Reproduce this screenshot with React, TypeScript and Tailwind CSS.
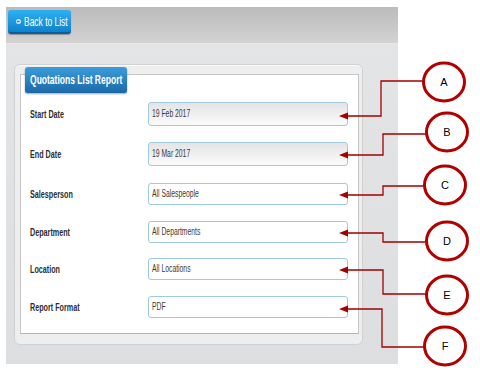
import React from "react";

const font = { fontFamily: '"Liberation Sans", Arial, sans-serif' };

type Row = { label: string; value: string; date?: boolean; mt: string };

const rows: Row[] = [
  { label: "Start Date", value: "19 Feb 2017", date: true, mt: "mt-[27px]" },
  { label: "End Date", value: "19 Mar 2017", date: true, mt: "mt-[16px]" },
  { label: "Salesperson", value: "All Salespeople", mt: "mt-[17px]" },
  { label: "Department", value: "All Departments", mt: "mt-[16px]" },
  { label: "Location", value: "All Locations", mt: "mt-[15px]" },
  { label: "Report Format", value: "PDF", mt: "mt-[16px]" },
];

const callouts = [
  { l: "A", cx: 444, cy: 82, d: "M423 81 H381 V116 H346", ay: 116 },
  { l: "B", cx: 447, cy: 132, d: "M427 134 H383 V155 H346", ay: 155 },
  { l: "C", cx: 445, cy: 185, d: "M424 186 H383 V195 H346", ay: 195 },
  { l: "D", cx: 447, cy: 241, d: "M427 242 H383 V233 H346", ay: 233 },
  { l: "E", cx: 447, cy: 295, d: "M427 294 H383 V270 H346", ay: 270 },
  { l: "F", cx: 445, cy: 346, d: "M424 347 H382 V309 H346", ay: 309 },
];

export default function App() {
  return (
    <div className="relative w-[480px] h-[380px] bg-white pt-[7px] pl-[6px] overflow-hidden" style={font}>
      <div className="w-[392px] h-[357px] flex flex-col bg-gradient-to-b from-[#e3e5e7] to-[#dcdee0]">
        {/* toolbar */}
        <div className="h-[37px] shrink-0 pl-[2px] pt-[3px] bg-gradient-to-b from-[#bbbbbb] to-[#d3d3d3] border-b border-[#e8e8e8]">
          <div className="w-[63px] h-[24px] rounded-[3px] bg-gradient-to-b from-[#2fb0f2] to-[#0e82cd] border-b-2 border-[#0b5f99] shadow-[0_1px_1px_rgba(0,0,0,0.3)] flex items-center pl-[8px] gap-[3px] text-[13px] leading-none">
            <svg width="5" height="7" viewBox="0 0 5 7" className="shrink-0">
              <circle cx="2.5" cy="3.5" r="2.5" fill="#cdeefc" />
              <path d="M3.8 3.5 H1.2 M2.3 2.3 L1.1 3.5 L2.3 4.7" stroke="#0e82cd" strokeWidth="0.9" fill="none" />
            </svg>
            <span className="inline-block origin-left scale-x-[0.65] whitespace-nowrap text-white text-[13px] leading-none">Back to List</span>
          </div>
        </div>
        {/* body */}
        <div className="pt-[20px] pl-[8px]">
          <div className="relative w-[349px] h-[281px] rounded-[6px] border border-[#cfd1d3] bg-[#eeeeee] pt-[9px] pl-[5px] shadow-[inset_0_1px_0_#fafafa]">
            <div className="w-[339px] h-[260px] border border-[#c6c6c6] border-b-[#b5b5b5] bg-white flex flex-col pl-[9px] text-[10px] leading-none">
              {rows.map((r) => (
                <div key={r.label} className={`flex items-center ${r.mt}`}>
                  <div className="w-[118px] shrink-0 flex items-center pt-[2px] text-[10px] leading-none">
                    <span className="inline-block origin-left scale-x-[0.72] whitespace-nowrap font-bold text-[10px] leading-none text-[#2e2e2e]">
                      {r.label}
                    </span>
                  </div>
                  <div
                    className={`w-[200px] shrink-0 ${r.date ? "h-[24px] bg-gradient-to-b from-[#e4e4e4] to-[#fbfbfb]" : "h-[22px] bg-white"} rounded-[3px] border border-[#9fcbe0] flex items-center pl-[3px] text-[10px] leading-none`}
                  >
                    <span className="inline-block origin-left scale-x-[0.68] whitespace-nowrap text-[10px] leading-none text-[#3a3a3a]">
                      {r.value}
                    </span>
                  </div>
                </div>
              ))}
            </div>
            {/* title tab */}
            <div className="absolute left-[10px] top-[2px] w-[102px] h-[26px] rounded-t-[3px] rounded-b-[2px] bg-gradient-to-b from-[#3b9ddb] to-[#1a69a8] shadow-[0_1px_2px_rgba(0,0,0,0.35)] flex items-center pl-[5px]">
              <span className="inline-block origin-left scale-x-[0.71] whitespace-nowrap text-white font-bold text-[12px] leading-none">
                Quotations List Report
              </span>
            </div>
          </div>
        </div>
      </div>

      {/* annotation overlay */}
      <svg className="absolute left-0 top-0" width="480" height="380" viewBox="0 0 480 380">
        {callouts.map((c) => (
          <g key={c.l}>
            <path d={c.d} stroke="#a30000" strokeWidth="1.3" fill="none" />
            <polygon points={`339,${c.ay} 348,${c.ay - 3.5} 348,${c.ay + 3.5}`} fill="#a30000" />
            <ellipse cx={c.cx} cy={c.cy} rx="20.5" ry="19" fill="white" stroke="#b00000" strokeWidth="3" />
            <text x={c.cx} y={c.cy + 4} textAnchor="middle" fontSize="11" fill="#000" style={font}>
              {c.l}
            </text>
          </g>
        ))}
      </svg>
    </div>
  );
}
